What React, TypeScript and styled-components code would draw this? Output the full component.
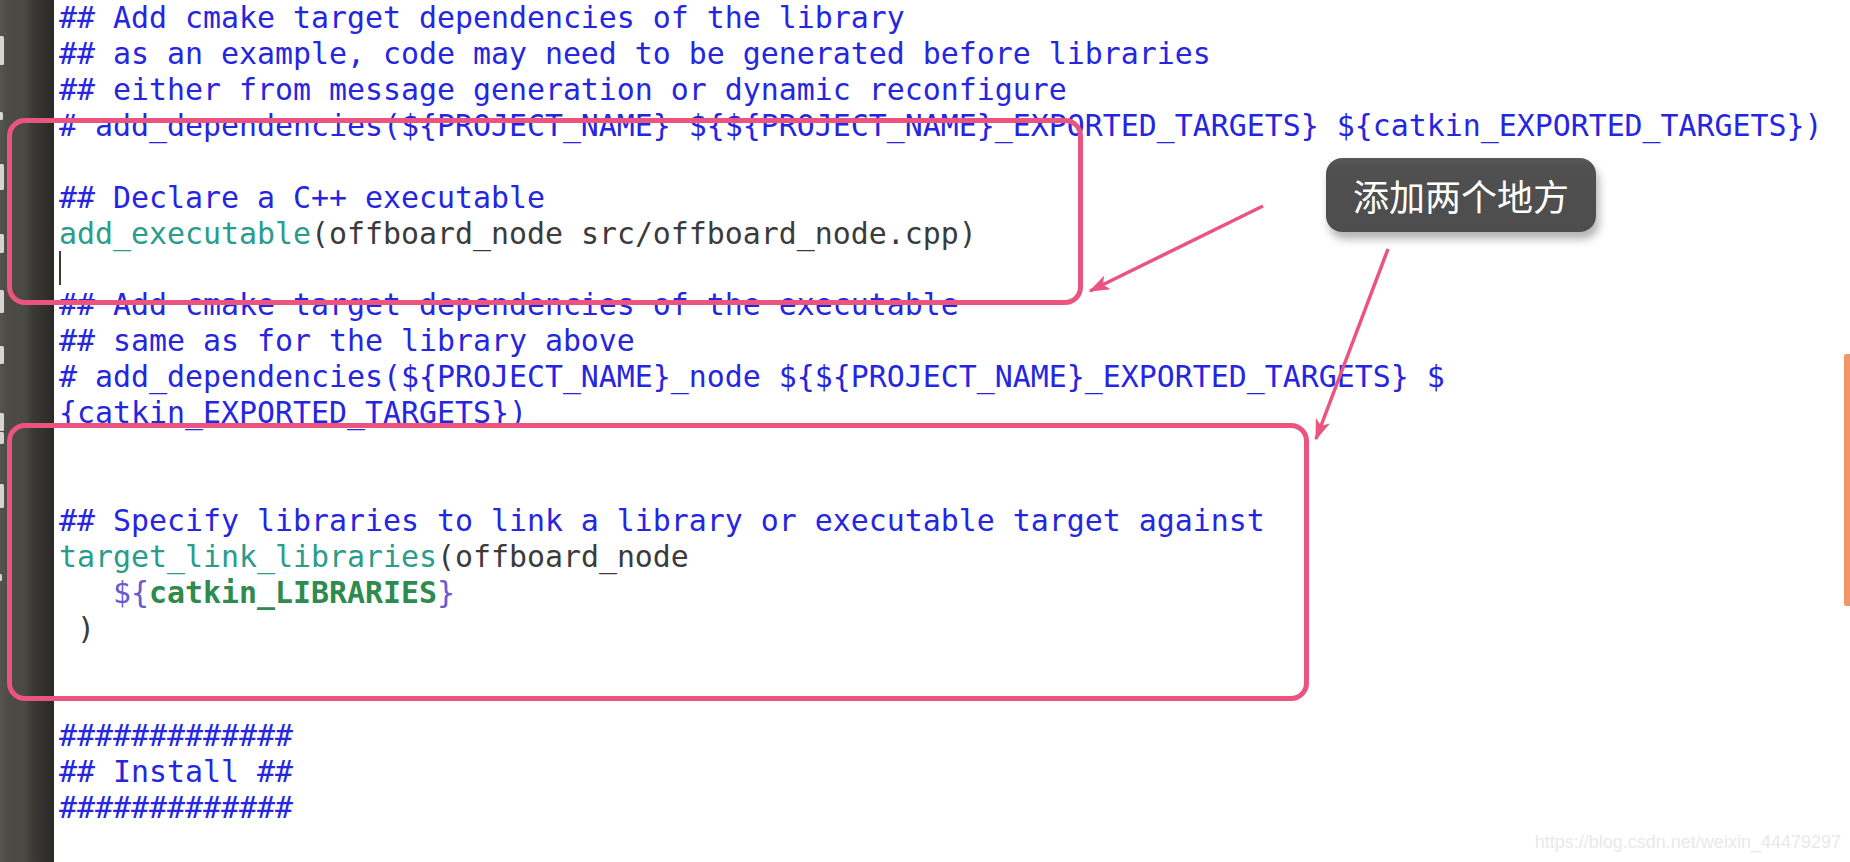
import React from 'react';
import styled, { createGlobalStyle } from 'styled-components';

const Global = createGlobalStyle`
  html, body {
    margin: 0;
    padding: 0;
    background: #ffffff;
  }
  body {
    width: 1850px;
    height: 862px;
    overflow: hidden;
  }
`;

type Kind = 'comment' | 'func' | 'plain' | 'var' | 'name';

const palette: Record<Kind, string> = {
  comment: '#2626e0',
  func: '#2a9c8b',
  plain: '#3b3b3b',
  var: '#6a5ad2',
  name: '#2e8a4e',
};

const Screen = styled.div`
  position: relative;
  display: flex;
  width: 1850px;
  height: 862px;
  overflow: hidden;
  background: #ffffff;
`;

const Launcher = styled.aside`
  flex: 0 0 54px;
  height: 100%;
  background: linear-gradient(
    to right,
    #55534d 0px,
    #4d4b46 8px,
    #4a4843 26px,
    #3b3a35 32px,
    #302f2b 46px,
    #2a2926 54px
  );
`;

const Editor = styled.main`
  flex: 1;
  display: flex;
  flex-direction: column;
  padding-left: 5px;
  font-family: 'DejaVu Sans Mono', 'Liberation Mono', monospace;
  font-size: 29.9px;
  color: ${palette.plain};
  white-space: pre;
`;

const Line = styled.div`
  height: 36px;
  line-height: 35px;
`;

const Tok = styled.span<{ $kind: Kind }>`
  color: ${(p) => palette[p.$kind]};
  font-weight: ${(p) => (p.$kind === 'name' ? 700 : 400)};
`;

const Caret = styled.span`
  display: inline-block;
  width: 2px;
  height: 34px;
  background: #3a3a3a;
  vertical-align: top;
`;

const Overlay = styled.div`
  position: absolute;
  inset: 0;
  pointer-events: none;
`;

const Callout = styled.div<{ $x: number; $y: number; $w: number; $h: number }>`
  position: absolute;
  left: ${(p) => p.$x}px;
  top: ${(p) => p.$y}px;
  width: ${(p) => p.$w}px;
  height: ${(p) => p.$h}px;
  box-sizing: border-box;
  border: 5px solid #ec5480;
  border-radius: 18px;
`;

const Arrows = styled.svg`
  position: absolute;
  left: 0;
  top: 0;
`;

const Label = styled.div`
  position: absolute;
  left: 1326px;
  top: 158px;
  width: 270px;
  height: 74px;
  box-sizing: border-box;
  display: flex;
  align-items: center;
  justify-content: center;
  border-radius: 16px;
  background: linear-gradient(to bottom, #5a5a5a 0px, #505050 8px, #4d4d4d 100%);
  box-shadow: 3px 7px 9px rgba(0, 0, 0, 0.3);
  color: #ffffff;
  font-family: 'Noto Sans CJK SC', 'Noto Sans', sans-serif;
  font-size: 36px;
  line-height: 1;
`;

const Scrollbar = styled.div`
  position: absolute;
  right: 0;
  top: 354px;
  width: 6px;
  height: 252px;
  background: #f2956a;
  border-radius: 2px 0 0 2px;
`;

const Watermark = styled.div`
  position: absolute;
  right: 9px;
  bottom: 9px;
  font-family: 'Liberation Sans', Arial, sans-serif;
  font-size: 18px;
  color: #e9e9e9;
`;

type Seg = [Kind, string];

const lines: (Seg[] | 'caret')[] = [
  [['comment', '## Add cmake target dependencies of the library']],
  [['comment', '## as an example, code may need to be generated before libraries']],
  [['comment', '## either from message generation or dynamic reconfigure']],
  [['comment', '# add_dependencies(${PROJECT_NAME} ${${PROJECT_NAME}_EXPORTED_TARGETS} ${catkin_EXPORTED_TARGETS})']],
  [],
  [['comment', '## Declare a C++ executable']],
  [['func', 'add_executable'], ['plain', '(offboard_node src/offboard_node.cpp)']],
  'caret',
  [['comment', '## Add cmake target dependencies of the executable']],
  [['comment', '## same as for the library above']],
  [['comment', '# add_dependencies(${PROJECT_NAME}_node ${${PROJECT_NAME}_EXPORTED_TARGETS} $']],
  [['comment', '{catkin_EXPORTED_TARGETS})']],
  [],
  [],
  [['comment', '## Specify libraries to link a library or executable target against']],
  [['func', 'target_link_libraries'], ['plain', '(offboard_node']],
  [['plain', '   '], ['var', '${'], ['name', 'catkin_LIBRARIES'], ['var', '}']],
  [['plain', ' )']],
  [],
  [],
  [['comment', '#############']],
  [['comment', '## Install ##']],
  [['comment', '#############']],
  [],
];

const fragments: [number, number, number][] = [
  [36, 29, 4],
  [112, 8, 3],
  [164, 26, 4],
  [234, 19, 4],
  [290, 23, 4],
  [346, 18, 4],
  [413, 18, 4],
  [432, 12, 4],
  [484, 24, 4],
  [574, 7, 2],
];

const LauncherIcons = () => (
  <svg width="54" height="862" viewBox="0 0 54 862">
    {fragments.map(([y, h, w], i) => (
      <rect key={i} x={-2} y={y} width={w + 2} height={h} rx={1.5} fill="#d6d5d1" />
    ))}
  </svg>
);

export default function App() {
  return (
    <>
      <Global />
      <Screen>
        <Launcher>
          <LauncherIcons />
        </Launcher>
        <Editor>
          {lines.map((ln, i) => (
            <Line key={i}>
              {ln === 'caret' ? (
                <Caret />
              ) : ln.length === 0 ? (
                ' '
              ) : (
                ln.map(([k, t], j) => (
                  <Tok key={j} $kind={k}>
                    {t}
                  </Tok>
                ))
              )}
            </Line>
          ))}
        </Editor>

        <Overlay>
          <Callout $x={7} $y={118} $w={1076} $h={187} />
          <Callout $x={7} $y={423} $w={1302} $h={278} />

          <Arrows width="1850" height="862" viewBox="0 0 1850 862">
            <defs>
              <marker
                id="head"
                viewBox="0 0 14 10"
                refX="13"
                refY="5"
                markerWidth="22"
                markerHeight="15"
                markerUnits="userSpaceOnUse"
                orient="auto"
              >
                <path d="M0,0 L14,5 L0,10 L3.5,5 Z" fill="#ec5480" />
              </marker>
            </defs>
            <line x1="1263" y1="206" x2="1090" y2="291" stroke="#ec5480" strokeWidth="3.5" markerEnd="url(#head)" />
            <line x1="1388" y1="249" x2="1316" y2="439" stroke="#ec5480" strokeWidth="3.5" markerEnd="url(#head)" />
          </Arrows>

          <Label>添加两个地方</Label>
          <Scrollbar />
          <Watermark>https://blog.csdn.net/weixin_44479297</Watermark>
        </Overlay>
      </Screen>
    </>
  );
}
